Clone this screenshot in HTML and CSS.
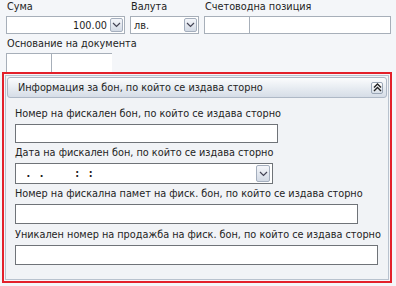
FILE: index.html
```html
<!DOCTYPE html>
<html lang="bg">
<head>
<meta charset="utf-8">
<link rel="stylesheet" href="styles.css">
</head>
<body>
<div class="top">
  <div class="lbl">Сума</div>
  <div class="lbl">Валута</div>
  <div class="lbl">Счетоводна позиция</div>
  <div class="fld combo num"><span class="val">100.00</span><span class="btn"><svg width="9" height="6" viewBox="0 0 9 6"><path d="M1 1 L4.5 4.5 L8 1" fill="none" stroke="#445" stroke-width="1.2"/></svg></span></div>
  <div class="fld combo"><span class="val">лв.</span><span class="btn"><svg width="9" height="6" viewBox="0 0 9 6"><path d="M1 1 L4.5 4.5 L8 1" fill="none" stroke="#445" stroke-width="1.2"/></svg></span></div>
  <div class="pair"><div class="fld a"></div><div class="fld b"></div></div>
</div>
<div class="top2">
  <div class="lbl">Основание на документа</div>
  <div class="pair2"><div class="fld a2"></div><div class="fld b2"></div></div>
</div>
<div class="redbox">
  <div class="panel">
    <div class="head">
      <span class="htitle">Информация за бон, по който се издава сторно</span>
      <span class="collapse"><svg width="9" height="9" viewBox="0 0 9 9"><path d="M1 4.5 L4.5 1 L8 4.5 M1 8 L4.5 4.5 L8 8" fill="none" stroke="#222" stroke-width="1.4"/></svg></span>
    </div>
    <div class="body">
      <div class="plbl">Номер на фискален бон, по който се издава сторно</div>
      <div class="inp w1"></div>
      <div class="plbl">Дата на фискален бон, по който се издава сторно</div>
      <div class="inp w2 date"><span class="dval"> .  .&nbsp;&nbsp;&nbsp;&nbsp;&nbsp;&nbsp;&nbsp;:  :</span><span class="btn big"><svg width="9" height="6" viewBox="0 0 9 6"><path d="M1 1 L4.5 4.5 L8 1" fill="none" stroke="#445" stroke-width="1.2"/></svg></span></div>
      <div class="plbl">Номер на фискална памет на фиск. бон, по който се издава сторно</div>
      <div class="inp w3"></div>
      <div class="plbl">Уникален номер на продажба на фиск. бон, по който се издава сторно</div>
      <div class="inp w4"></div>
    </div>
  </div>
</div>
</body>
</html>
```
FILE: styles.css
```css
html, body {
  margin: 0;
  padding: 0;
  background: #f4f6f9;
  width: 396px;
  height: 286px;
  overflow: hidden;
  font-family: "DejaVu Sans Condensed", "DejaVu Sans", sans-serif;
  font-size: 10.8px;
  color: #1e1e1e;
}
.top {
  display: grid;
  grid-template-columns: 119px 69px 187px;
  column-gap: 5px;
  padding-left: 6px;
}
.lbl {
  height: 16px;
  line-height: 13px;
  padding-left: 1px;
  white-space: nowrap;
}
.fld {
  box-sizing: border-box;
  height: 18px;
  border: 1px solid #a7afb9;
  background: #fff;
}
.combo {
  display: flex;
  align-items: center;
  justify-content: space-between;
  padding: 0 1px 0 3px;
}
.num .val {
  flex: 1;
  text-align: right;
  padding-right: 3px;
}
.btn {
  box-sizing: border-box;
  width: 13px;
  height: 14px;
  border: 1px solid #a4aebd;
  border-radius: 2px;
  background: linear-gradient(#f4f6fa, #d3dae5);
  display: flex;
  align-items: center;
  justify-content: center;
}
.pair {
  display: flex;
}
.pair .a {
  width: 46px;
}
.pair .b {
  flex: 1;
  border-left: none;
}
.top2 {
  padding: 3px 0 0 6px;
}
.pair2 {
  display: flex;
}
.a2 {
  width: 46px;
  border-bottom: none;
}
.b2 {
  width: 60px;
  border-left: none;
  border-bottom: none;
  border-right: none;
}
.top2 .fld {
  height: 19px;
}
.redbox {
  position: absolute;
  left: 2px;
  top: 72px;
  width: 390px;
  height: 211px;
  box-sizing: border-box;
  border: 2px solid #e3202a;
  padding: 1px;
  background: #f4f6f9;
}
.panel {
  box-sizing: border-box;
  height: 100%;
  border: 1px solid #b8c2ce;
  background: #f1f3f6;
  padding: 1px;
}
.head {
  box-sizing: border-box;
  height: 21px;
  border: 1px solid #aeb8c6;
  border-radius: 3px;
  background: linear-gradient(#fbfcfd, #e6ebf1 55%, #d6dde7);
  display: flex;
  align-items: center;
  justify-content: space-between;
  padding: 0 3px 0 10px;
}
.htitle {
  line-height: 14px;
  white-space: nowrap;
}
.collapse {
  box-sizing: border-box;
  width: 12px;
  height: 12px;
  border: 1px solid #9aa6b6;
  border-radius: 2px;
  background: linear-gradient(#ffffff, #d8dfe8);
  display: flex;
  align-items: center;
  justify-content: center;
}
.body {
  padding: 9px 0 0 8px;
}
.plbl {
  height: 17px;
  line-height: 14px;
  white-space: nowrap;
}
.inp {
  box-sizing: border-box;
  height: 19px;
  border: 1px solid #6f7378;
  background: #fff;
  margin-bottom: 3px;
}
.w1 { width: 263px; }
.w2 { width: 258px; height: 21px; }
.w3 { width: 343px; height: 20px; margin-bottom: 4px; }
.w4 { width: 363px; height: 20px; }
.date {
  display: flex;
  align-items: center;
  justify-content: space-between;
  padding: 0 2px 0 6px;
}
.dval {
  white-space: pre;
  font-weight: bold;
  letter-spacing: 1px;
}
.btn.big {
  width: 14px;
  height: 17px;
}
```
